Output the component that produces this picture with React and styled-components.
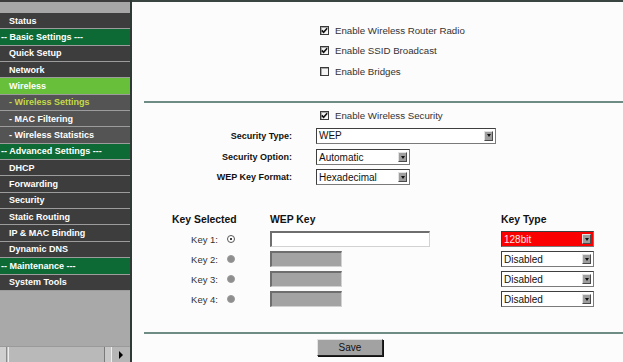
import styled, { createGlobalStyle } from 'styled-components'

const GlobalStyle = createGlobalStyle`
  html, body {
    margin: 0;
    padding: 0;
  }
  body {
    font-family: "Liberation Sans", Arial, sans-serif;
    background: #fcfcfc;
    overflow: hidden;
  }
`

const Page = styled.div`
  display: flex;
  width: 623px;
  height: 362px;
  overflow: hidden;
`

const Sidebar = styled.nav`
  width: 130px;
  flex: none;
  display: flex;
  flex-direction: column;
  background: #a9a9a9;
  border-right: 2px solid #2f3a36;
`

const SideTop = styled.div`
  height: 11px;
  border-top: 2px solid #3b3b3b;
  background: #a6a6a6;
`

const menuBg = {
  item: '#3d3d3d',
  header: '#0d6a34',
  active: '#68c03a',
  sub: '#545454',
  subActive: '#545454',
}

const MenuItem = styled.div`
  height: 16.35px;
  box-sizing: border-box;
  border-bottom: 1px solid #9c9c9c;
  padding-left: ${({ $kind }) => ($kind === 'header' ? 1 : 9)}px;
  display: flex;
  align-items: center;
  font-size: 9px;
  font-weight: bold;
  white-space: nowrap;
  overflow: hidden;
  color: ${({ $kind }) => ($kind === 'subActive' ? '#c6da48' : '#ffffff')};
  background: ${({ $kind }) => menuBg[$kind]};
`

const SideFill = styled.div`
  flex: 1;
`

const ScrollBar = styled.div`
  height: 15px;
  display: flex;
  background: #c2c2c2;
  border-top: 1px solid #9a9a9a;
`

const ScrollStub = styled.div`
  width: 6px;
  background: #cfcfcf;
  border-right: 1px solid #8a8a8a;
`

const ScrollThumb = styled.div`
  width: 95px;
  margin-left: 1px;
  background: #b9b9b9;
  border-left: 1px solid #eeeeee;
  border-right: 1px solid #7a7a7a;
`

const ScrollTrack = styled.div`
  flex: 1;
  background: #c8c8c8;
  border-right: 1px solid #eeeeee;
`

const ScrollButton = styled.div`
  width: 18px;
  display: flex;
  align-items: center;
  justify-content: center;
  background: #b6b6b6;
  &::after {
    content: '';
    border-left: 4px solid #000;
    border-top: 4px solid transparent;
    border-bottom: 4px solid transparent;
  }
`

const Content = styled.main`
  flex: 1;
  display: flex;
  flex-direction: column;
  border-top: 2px solid #3a4541;
  background: #fcfcfc;
  color: #333;
`

const Section = styled.div`
  display: flex;
  flex-direction: column;
  padding-top: ${({ $top }) => $top || 0}px;
`

const Row = styled.div`
  height: ${({ $h }) => $h}px;
  display: grid;
  grid-template-columns: 160px 1fr;
  column-gap: 24px;
  align-items: center;
`

const Label = styled.span`
  text-align: right;
  font-size: 9px;
  font-weight: bold;
  color: #111;
  white-space: nowrap;
`

const CheckLine = styled.label`
  grid-column: 2;
  display: flex;
  align-items: center;
  gap: 6px;
  padding-left: 4px;
  font-size: 9.7px;
  color: #333;
  white-space: nowrap;
`

const Box = styled.span`
  width: 9px;
  height: 9px;
  box-sizing: border-box;
  border: 1px solid #3a3a3a;
  background: #f4f4f4;
  box-shadow: inset 1px 1px 0 #a8a8a8;
  display: flex;
  align-items: center;
  justify-content: center;
`

const Divider = styled.div`
  height: 2px;
  margin: ${({ $m }) => $m};
  margin-left: 12px;
  background: #6f8c84;
`

const SelectBox = styled.div`
  width: ${({ $w }) => $w}px;
  height: 16px;
  box-sizing: border-box;
  display: flex;
  align-items: center;
  border: 1px solid #3e3e3e;
  border-bottom-color: #7a7a7a;
  border-right-color: #7a7a7a;
  background: ${({ $red }) => ($red ? '#fb0000' : '#ffffff')};
  color: ${({ $red }) => ($red ? '#ffe6e6' : '#111')};
  font-size: 10px;
  padding-left: 2px;
`

const SelectText = styled.span`
  flex: 1;
  white-space: nowrap;
`

const Arrow = styled.span`
  width: 9px;
  align-self: stretch;
  margin: 2px 2px 2px 0;
  box-sizing: border-box;
  background: #9d9d9d;
  border: 1px solid #e2e2e2;
  border-right-color: #4a4a4a;
  border-bottom-color: #4a4a4a;
  display: flex;
  align-items: center;
  justify-content: center;
  &::after {
    content: '';
    border-top: 3px solid #111;
    border-left: 2.5px solid transparent;
    border-right: 2.5px solid transparent;
  }
`

const KeyTable = styled.div`
  display: grid;
  grid-template-columns: 98px 231px 1fr;
  grid-auto-rows: 20px;
  align-items: center;
  padding-left: 40px;
  margin-top: 23px;
`

const HeadCell = styled.span`
  font-size: 10.4px;
  font-weight: bold;
  color: #111;
  white-space: nowrap;
`

const KeyCell = styled.span`
  display: flex;
  justify-content: flex-end;
  align-items: center;
  gap: 9px;
  padding-right: 35px;
  font-size: 9.5px;
  color: #333;
`

const Radio = styled.span`
  width: 8px;
  height: 8px;
  box-sizing: border-box;
  border-radius: 50%;
  border: 1px solid ${({ $on }) => ($on ? '#555' : '#9a9a9a')};
  background: ${({ $on }) => ($on ? '#ffffff' : '#8e8e8e')};
  display: flex;
  align-items: center;
  justify-content: center;
  &::after {
    content: '';
    width: 2px;
    height: 2px;
    border-radius: 50%;
    background: ${({ $on }) => ($on ? '#000' : 'transparent')};
  }
`

const KeyInput = styled.span`
  display: block;
  width: ${({ $w }) => $w}px;
  height: 16px;
  box-sizing: border-box;
  border-top: 2px solid #6e6e6e;
  border-left: 2px solid #6e6e6e;
  border-right: 1px solid #d2d2d2;
  border-bottom: 1px solid #d2d2d2;
  background: ${({ $off }) => ($off ? '#a3a3a3' : '#ffffff')};
`

const SaveRow = styled.div`
  display: grid;
  grid-template-columns: 160px 1fr;
  column-gap: 25px;
  margin-top: 5px;
`

const SaveButton = styled.button`
  grid-column: 2;
  width: 66px;
  height: 17px;
  padding: 0;
  font-family: "Liberation Sans", Arial, sans-serif;
  font-size: 10px;
  color: #111;
  background: #a2a2a2;
  border: 1px solid #222;
  border-top-color: #e4e4e4;
  border-left-color: #e4e4e4;
  box-shadow: 1px 1px 0 #111;
`

const menu = [
  ['item', 'Status'],
  ['header', '-- Basic Settings ---'],
  ['item', 'Quick Setup'],
  ['item', 'Network'],
  ['active', 'Wireless'],
  ['subActive', '- Wireless Settings'],
  ['sub', '- MAC Filtering'],
  ['sub', '- Wireless Statistics'],
  ['header', '-- Advanced Settings ---'],
  ['item', 'DHCP'],
  ['item', 'Forwarding'],
  ['item', 'Security'],
  ['item', 'Static Routing'],
  ['item', 'IP & MAC Binding'],
  ['item', 'Dynamic DNS'],
  ['header', '-- Maintenance ---'],
  ['item', 'System Tools'],
]

const keys = [
  { name: 'Key 1:', on: true, type: '128bit' },
  { name: 'Key 2:', on: false, type: 'Disabled' },
  { name: 'Key 3:', on: false, type: 'Disabled' },
  { name: 'Key 4:', on: false, type: 'Disabled' },
]

function CheckBox({ checked }) {
  return (
    <Box>
      {checked && (
        <svg width="7" height="7" viewBox="0 0 7 7">
          <path d="M0.8 3.4 L2.6 5.3 L6.2 1.2" fill="none" stroke="#111" strokeWidth="1.6" />
        </svg>
      )}
    </Box>
  )
}

function Select({ width, value, red }) {
  return (
    <SelectBox $w={width} $red={red}>
      <SelectText>{value}</SelectText>
      <Arrow />
    </SelectBox>
  )
}

const App = () => {
  return (
    <Page>
      <GlobalStyle />
      <Sidebar>
        <SideTop />
        {menu.map(([kind, text]) => (
          <MenuItem key={text} $kind={kind}>
            {text}
          </MenuItem>
        ))}
        <SideFill />
        <ScrollBar>
          <ScrollStub />
          <ScrollThumb />
          <ScrollTrack />
          <ScrollButton />
        </ScrollBar>
      </Sidebar>

      <Content>
        <Section $top={18}>
          <Row $h={20.5}>
            <CheckLine>
              <CheckBox checked />
              Enable Wireless Router Radio
            </CheckLine>
          </Row>
          <Row $h={20.5}>
            <CheckLine>
              <CheckBox checked />
              Enable SSID Broadcast
            </CheckLine>
          </Row>
          <Row $h={20.5}>
            <CheckLine>
              <CheckBox />
              Enable Bridges
            </CheckLine>
          </Row>
        </Section>

        <Divider $m="19.5px 0 0" />

        <Section $top={2}>
          <Row $h={20}>
            <CheckLine>
              <CheckBox checked />
              Enable Wireless Security
            </CheckLine>
          </Row>
          <Row $h={21}>
            <Label>Security Type:</Label>
            <Select width={180} value="WEP" />
          </Row>
          <Row $h={22}>
            <Label>Security Option:</Label>
            <Select width={94} value="Automatic" />
          </Row>
          <Row $h={18}>
            <Label>WEP Key Format:</Label>
            <Select width={94} value="Hexadecimal" />
          </Row>
        </Section>

        <KeyTable>
          <HeadCell>Key Selected</HeadCell>
          <HeadCell>WEP Key</HeadCell>
          <HeadCell>Key Type</HeadCell>
          {keys.map((k) => [
            <KeyCell key={`${k.name}-sel`}>
              {k.name}
              <Radio $on={k.on} />
            </KeyCell>,
            <KeyInput key={`${k.name}-input`} $w={k.on ? 160 : 72} $off={!k.on} />,
            <Select key={`${k.name}-type`} width={93} value={k.type} red={k.on} />,
          ])}
        </KeyTable>

        <Divider $m="23px 0 0" />

        <SaveRow>
          <SaveButton>Save</SaveButton>
        </SaveRow>
      </Content>
    </Page>
  )
}

export default App
